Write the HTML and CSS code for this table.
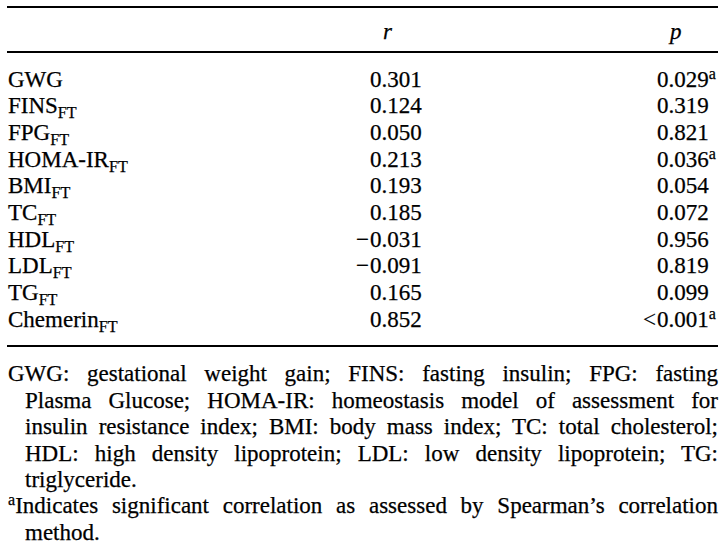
FILE: index.html
```html
<!DOCTYPE html>
<html lang="en">
<head>
<meta charset="utf-8">
<title>Correlation table</title>
<link rel="stylesheet" href="styles.css">
</head>
<body>
<div class="wrap">
  <table class="corr">
    <colgroup><col class="c-label"><col class="c-r"><col class="c-p"></colgroup>
    <thead>
      <tr><th></th><th class="h"><i>r</i></th><th class="h"><i>p</i></th></tr>
    </thead>
    <tbody>
      <tr><td>GWG</td><td>0.301</td><td>0.029<sup>a</sup></td></tr>
      <tr><td>FINS<sub>FT</sub></td><td>0.124</td><td>0.319</td></tr>
      <tr><td>FPG<sub>FT</sub></td><td>0.050</td><td>0.821</td></tr>
      <tr><td>HOMA-IR<sub>FT</sub></td><td>0.213</td><td>0.036<sup>a</sup></td></tr>
      <tr><td>BMI<sub>FT</sub></td><td>0.193</td><td>0.054</td></tr>
      <tr><td>TC<sub>FT</sub></td><td>0.185</td><td>0.072</td></tr>
      <tr><td>HDL<sub>FT</sub></td><td><span class="hang">&minus;</span>0.031</td><td>0.956</td></tr>
      <tr><td>LDL<sub>FT</sub></td><td><span class="hang">&minus;</span>0.091</td><td>0.819</td></tr>
      <tr><td>TG<sub>FT</sub></td><td>0.165</td><td>0.099</td></tr>
      <tr><td>Chemerin<sub>FT</sub></td><td>0.852</td><td><span class="hang">&lt;</span>0.001<sup>a</sup></td></tr>
    </tbody>
  </table>
  <div class="notes">
    <p class="note">
      <span class="ln first">GWG: gestational weight gain; FINS: fasting insulin; FPG: fasting</span>
      <span class="ln">Plasma Glucose; HOMA-IR: homeostasis model of assessment for</span>
      <span class="ln">insulin resistance index; BMI: body mass index; TC: total cholesterol;</span>
      <span class="ln">HDL: high density lipoprotein; LDL: low density lipoprotein; TG:</span>
      <span class="ln end">triglyceride.</span>
    </p>
    <p class="note">
      <span class="ln first"><sup>a</sup>Indicates significant correlation as assessed by Spearman’s correlation</span>
      <span class="ln end">method.</span>
    </p>
  </div>
</div>
</body>
</html>
```
FILE: styles.css
```css
html, body {
  margin: 0;
  padding: 0;
  background: #ffffff;
}

body {
  font-family: "Liberation Serif", "Times New Roman", serif;
  font-size: 23px;
  color: #000000;
  -webkit-text-stroke: 0.25px #000000;
}

.wrap {
  width: 711px;
  margin: 6px 0 0 7px;
}

.corr {
  width: 100%;
  border-collapse: separate;
  border-spacing: 0;
  table-layout: fixed;
  border-top: 2px solid #000;
  border-bottom: 2px solid #000;
  line-height: 26.67px;
}

.c-label { width: 363px; }
.c-r { width: 287px; }
.c-p { width: 61px; }

.corr th,
.corr td {
  padding: 0;
  text-align: left;
  vertical-align: baseline;
  white-space: nowrap;
  font-weight: normal;
}

.corr thead th {
  padding-top: 11px;
  padding-bottom: 5px;
  border-bottom: 2px solid #000;
}

.corr th.h {
  padding-left: 13px;
}

.corr td:first-child {
  padding-left: 1px;
}

.corr tbody tr:first-child td {
  padding-top: 14px;
}

.corr tbody tr:last-child td {
  padding-bottom: 12px;
}

.hang {
  display: inline-block;
  width: 13px;
  margin-left: -14px;
  margin-right: 1px;
}

sub, sup {
  font-size: 0.7em;
  line-height: 0;
}

sub {
  vertical-align: -0.3em;
}

sup {
  vertical-align: 0.47em;
}

.notes {
  margin-top: 14px;
}

.note {
  margin: 0;
  line-height: 26.4px;
}

.ln {
  display: block;
  padding-left: 18px;
  text-align: justify;
  text-align-last: justify;
  white-space: nowrap;
}

.ln.first {
  padding-left: 1px;
  white-space: normal;
}

.ln.end {
  text-align-last: left;
}
```
